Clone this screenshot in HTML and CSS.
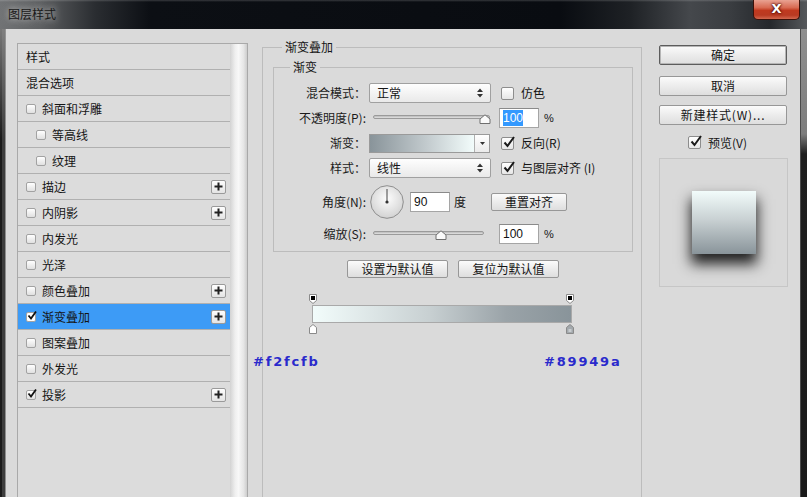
FILE: index.html
```html
<!DOCTYPE html>
<html lang="zh">
<head>
<meta charset="utf-8">
<title>图层样式</title>
<link rel="stylesheet" href="styles.css">
</head>
<body>
<div class="window">
  <div class="titlebar">
    <span class="title">图层样式</span>
    <div class="close">X</div>
  </div>
  <div class="frame">
    <div class="frame-l"></div>
    <div class="client">
      <div class="col-left">
        <div class="listbox">
          <ul class="items">
            <li class="item">样式</li>
            <li class="item">混合选项</li>
            <li class="item"><span class="cb"></span>斜面和浮雕</li>
            <li class="item sub"><span class="cb"></span>等高线</li>
            <li class="item sub"><span class="cb"></span>纹理</li>
            <li class="item"><span class="cb"></span>描边<span class="plus"><svg width="9" height="9" viewBox="0 0 9 9"><path d="M4.5 0.5v8M0.5 4.5h8" stroke="#222" stroke-width="2"/></svg></span></li>
            <li class="item"><span class="cb"></span>内阴影<span class="plus"><svg width="9" height="9" viewBox="0 0 9 9"><path d="M4.5 0.5v8M0.5 4.5h8" stroke="#222" stroke-width="2"/></svg></span></li>
            <li class="item"><span class="cb"></span>内发光</li>
            <li class="item"><span class="cb"></span>光泽</li>
            <li class="item"><span class="cb"></span>颜色叠加<span class="plus"><svg width="9" height="9" viewBox="0 0 9 9"><path d="M4.5 0.5v8M0.5 4.5h8" stroke="#222" stroke-width="2"/></svg></span></li>
            <li class="item on"><span class="cb"><svg width="10" height="10" viewBox="0 0 10 10"><path d="M1.5 4.5L4 7.5L9 0.5" stroke="#111" stroke-width="1.8" fill="none"/></svg></span>渐变叠加<span class="plus"><svg width="9" height="9" viewBox="0 0 9 9"><path d="M4.5 0.5v8M0.5 4.5h8" stroke="#222" stroke-width="2"/></svg></span></li>
            <li class="item"><span class="cb"></span>图案叠加</li>
            <li class="item"><span class="cb"></span>外发光</li>
            <li class="item"><span class="cb"><svg width="10" height="10" viewBox="0 0 10 10"><path d="M1.5 4.5L4 7.5L9 0.5" stroke="#111" stroke-width="1.8" fill="none"/></svg></span>投影<span class="plus"><svg width="9" height="9" viewBox="0 0 9 9"><path d="M4.5 0.5v8M0.5 4.5h8" stroke="#222" stroke-width="2"/></svg></span></li>
          </ul>
          <div class="scroll"></div>
        </div>
      </div>

      <div class="col-main">
        <fieldset class="grp outer">
          <legend>渐变叠加</legend>
          <fieldset class="grp inner">
            <legend>渐变</legend>
            <div class="row first">
              <span class="lbl">混合模式：</span>
              <div class="select"><span>正常</span><svg class="updown" width="6" height="10" viewBox="0 0 6 10"><path d="M0 4L3 0.5L6 4Z M0 6L3 9.5L6 6Z" fill="#333"/></svg></div>
              <span class="chk"></span><span class="chk-txt">仿色</span>
            </div>
            <div class="row">
              <span class="lbl">不透明度(P):</span>
              <div class="slider s-op"><div class="track"></div><svg class="thumb t-op" width="12" height="10" viewBox="0 0 12 10"><path d="M1 9.5V5L6 0.8L11 5V9.5Z" fill="#fafafa" stroke="#6f6f6f"/></svg></div>
              <span class="inp i-op"><span class="hl">100</span></span>
              <span class="pct">%</span>
            </div>
            <div class="row">
              <span class="lbl">渐变：</span>
              <div class="swatch"><div class="sw-grad"></div><div class="sw-dd"><svg width="5" height="3" viewBox="0 0 5 3"><path d="M0 0H5L2.5 3Z" fill="#333"/></svg></div></div>
              <span class="chk on"><svg width="13" height="13" viewBox="0 0 13 13"><path d="M2.5 6.5L5.5 10L12 1" stroke="#1a1a1a" stroke-width="2" fill="none"/></svg></span><span class="chk-txt">反向(R)</span>
            </div>
            <div class="row">
              <span class="lbl">样式：</span>
              <div class="select"><span>线性</span><svg class="updown" width="6" height="10" viewBox="0 0 6 10"><path d="M0 4L3 0.5L6 4Z M0 6L3 9.5L6 6Z" fill="#333"/></svg></div>
              <span class="chk on"><svg width="13" height="13" viewBox="0 0 13 13"><path d="M2.5 6.5L5.5 10L12 1" stroke="#1a1a1a" stroke-width="2" fill="none"/></svg></span><span class="chk-txt">与图层对齐 (I)</span>
            </div>
            <div class="row tall">
              <span class="lbl">角度(N):</span>
              <svg class="dial" width="34" height="34" viewBox="0 0 34 34">
                <defs><radialGradient id="dg" cx="50%" cy="40%" r="60%"><stop offset="0" stop-color="#fdfdfd"/><stop offset="1" stop-color="#d2d2d2"/></radialGradient></defs>
                <circle cx="17" cy="17" r="16.3" fill="url(#dg)" stroke="#8e8e8e"/>
                <path d="M17 17V4" stroke="#444" stroke-width="1"/>
                <circle cx="17" cy="17" r="1.6" fill="#333"/>
              </svg>
              <span class="inp i-ang">90</span>
              <span class="deg">度</span>
              <button class="btn b-reset">重置对齐</button>
            </div>
            <div class="row">
              <span class="lbl">缩放(S):</span>
              <div class="slider s-sc"><div class="track"></div><svg class="thumb t-sc" width="12" height="10" viewBox="0 0 12 10"><path d="M1 9.5V5L6 0.8L11 5V9.5Z" fill="#fafafa" stroke="#6f6f6f"/></svg></div>
              <span class="inp i-sc">100</span>
              <span class="pct">%</span>
            </div>
          </fieldset>
          <div class="btnrow">
            <button class="btn b-def">设置为默认值</button>
            <button class="btn b-def">复位为默认值</button>
          </div>
          <div class="gradedit">
            <div class="stops">
              <svg width="8" height="10" viewBox="0 0 8 10"><path d="M0.5 0.5H7.5V6.5L4 9.5L0.5 6.5Z" fill="#fff" stroke="#8a8a8a"/><rect x="2" y="2" width="4" height="4" fill="#000"/></svg>
              <svg width="8" height="10" viewBox="0 0 8 10"><path d="M0.5 0.5H7.5V6.5L4 9.5L0.5 6.5Z" fill="#fff" stroke="#8a8a8a"/><rect x="2" y="2" width="4" height="4" fill="#000"/></svg>
            </div>
            <div class="gbar"></div>
            <div class="stops bottom">
              <svg width="8" height="10" viewBox="0 0 8 10"><path d="M0.5 9.5H7.5V3.5L4 0.5L0.5 3.5Z" fill="#fff" stroke="#8a8a8a"/></svg>
              <svg width="8" height="10" viewBox="0 0 8 10"><path d="M0.5 9.5H7.5V3.5L4 0.5L0.5 3.5Z" fill="#a3a9ad" stroke="#8a8a8a"/><rect x="2.5" y="5" width="3" height="3" fill="#c9cdd0"/></svg>
            </div>
          </div>
        </fieldset>
      </div>

      <div class="col-side">
        <button class="btn side default">确定</button>
        <button class="btn side b-cancel">取消</button>
        <button class="btn side b-new">新建样式(W)...</button>
        <div class="preview-row">
          <span class="chk on"><svg width="13" height="13" viewBox="0 0 13 13"><path d="M2.5 6.5L5.5 10L12 1" stroke="#1a1a1a" stroke-width="2" fill="none"/></svg></span><span class="chk-txt">预览(V)</span>
        </div>
        <div class="preview">
          <div class="sample"></div>
        </div>
      </div>

      <span class="hex hex-a">#f2fcfb</span>
      <span class="hex hex-b">#89949a</span>
    </div>
    <div class="frame-r"></div>
  </div>
</div>
</body>
</html>
```

FILE: styles.css
```css
* { box-sizing: border-box; }

body {
  margin: 0;
  background: #000;
  font-family: "Noto Sans CJK SC", "Noto Sans", sans-serif;
  font-size: 12px;
  color: #151515;
}

.window {
  width: 807px;
  height: 497px;
  overflow: hidden;
  display: flex;
  flex-direction: column;
  background: #111;
}

/* ---------- title bar ---------- */
.titlebar {
  height: 29px;
  flex: none;
  display: flex;
  align-items: flex-start;
  background:
    linear-gradient(to bottom, rgba(255,255,255,0.18) 0, rgba(255,255,255,0) 2px),
    linear-gradient(to right, #717375 0, #5e6062 40px, #2a2d31 95px, #0c0f14 150px, #090c11 560px, #1e2125 630px, #45484c 690px, #3a3d41 730px, #25282c 770px, #55585b 807px);
}

.title {
  margin: 5px 0 0 8px;
  line-height: 18px;
  color: #181818;
  text-shadow: 0 0 6px rgba(190,190,190,0.9), 0 0 10px rgba(190,190,190,0.7);
}

.close {
  margin-left: auto;
  margin-right: 7px;
  width: 47px;
  height: 20px;
  border: 1px solid #3b1008;
  border-top: none;
  border-radius: 0 0 5px 5px;
  background: linear-gradient(to bottom, #e9a292 0, #d86a52 40%, #c0391f 55%, #b93a22 80%, #d2674e 100%);
  color: #fff;
  font: bold 13px "DejaVu Sans", sans-serif;
  text-align: center;
  line-height: 18px;
  text-shadow: 0 0 2px #400, 0 0 3px #400;
}

/* ---------- frame ---------- */
.frame {
  flex: 1;
  display: flex;
  min-height: 0;
}

.frame-l {
  width: 6px;
  flex: none;
  background:
    linear-gradient(to bottom, rgba(150,150,150,0.75) 0, rgba(150,150,150,0) 110px),
    linear-gradient(to right, #1b1b1b 0 2px, #3d3d3d 2px 5px, #8f8f8f 5px 6px);
}

.frame-r {
  width: 7px;
  flex: none;
  background:
    linear-gradient(to right, #4a4a4a 0 1px, transparent 1px),
    linear-gradient(to bottom, #8e8e8e 0, #7d7d7d 105px, #1e1e1e 125px, #1a1a1a 100%);
}

.client {
  flex: 1;
  display: flex;
  position: relative;
  overflow: hidden;
  background: #dadada;
}

/* ---------- left list ---------- */
.col-left {
  flex: none;
  width: 231px;
  margin: 14px 0 0 11px;
}

.listbox {
  display: flex;
  height: 470px;
  border: 1px solid #a9a9a9;
  background: #dcdcdc;
}

.items {
  list-style: none;
  margin: 0;
  padding: 0;
  width: 212px;
  flex: none;
}

.item {
  height: 26px;
  border-bottom: 1px solid #b0b0b0;
  display: flex;
  align-items: center;
  padding-left: 8px;
  line-height: 16px;
}

.item.sub { padding-left: 18px; }

.item.on { background: #3d9bf6; }

.cb {
  width: 10px;
  height: 10px;
  flex: none;
  margin-right: 6px;
  border: 1px solid #a2a2a2;
  border-radius: 2px;
  background: linear-gradient(#ffffff, #e0e0e0);
  position: relative;
}

.cb svg {
  position: absolute;
  left: 0;
  top: -2px;
}

.item.on .cb { background: #fff; }

.plus {
  margin-left: auto;
  margin-right: 4px;
  width: 15px;
  height: 14px;
  border: 1px solid #9a9a9a;
  border-radius: 2px;
  background: linear-gradient(#fefefe, #e4e4e4);
  display: flex;
  align-items: center;
  justify-content: center;
}

.scroll {
  width: 17px;
  flex: none;
  background: linear-gradient(to right, #d3d3d3, #efefef 30%, #f8f8f8 50%, #e6e6e6 80%, #cdcdcd);
}

/* ---------- main ---------- */
.col-main {
  flex: none;
  width: 380px;
  margin-left: 14px;
}

.grp {
  min-width: 0;
  border: 1px solid #bcbcbc;
}

.grp legend {
  padding: 0 3px;
  line-height: 16px;
}

.outer {
  margin: 10px 0 0 0;
  padding: 0;
  height: 480px;
}

.outer > legend { margin-left: 19px; }

.inner {
  margin: 4px 8px 0 10px;
  padding: 8px 0 7px 0;
}

.inner > legend { margin-left: 16px; }

.row {
  display: flex;
  align-items: center;
  height: 20px;
  margin-top: 5px;
  line-height: 16px;
}

.row.first { margin-top: 0; }

.row.tall {
  height: 34px;
  margin-top: 7px;
}

.lbl {
  width: 92px;
  flex: none;
  text-align: right;
  color: #1a1a1a;
}

.select {
  width: 122px;
  height: 20px;
  margin-left: 3px;
  border: 1px solid #a0a0a0;
  border-radius: 2px;
  background: linear-gradient(#fefefe, #e9e9e9);
  display: flex;
  align-items: center;
  justify-content: space-between;
  padding: 0 7px 0 7px;
}

.chk {
  width: 13px;
  height: 13px;
  flex: none;
  margin-left: 10px;
  border: 1px solid #8d8d8d;
  border-radius: 2px;
  background: linear-gradient(#ffffff, #e6e6e6);
  position: relative;
}

.chk svg {
  position: absolute;
  left: 0;
  top: -2px;
}

.chk-txt { margin-left: 7px; }

.slider {
  position: relative;
  height: 12px;
  margin-left: 7px;
  flex: none;
}

.s-op { width: 117px; }
.s-sc { width: 111px; }

.track {
  position: absolute;
  left: 0;
  right: 0;
  top: 3px;
  height: 4px;
  border: 1px solid #9a9a9a;
  border-radius: 2px;
  background: linear-gradient(#b9b9b9, #e2e2e2);
}

.thumb { position: absolute; top: 2px; }
.t-op { left: 106px; }
.t-sc { left: 62px; }

.inp {
  width: 40px;
  height: 20px;
  flex: none;
  border: 1px solid #a5a5a5;
  border-top-color: #8a8a8a;
  background: #fff;
  padding-left: 3px;
  font: 12px/18px "Liberation Sans", sans-serif;
  color: #111;
}

.i-op { margin-left: 9px; }
.i-ang { margin-left: 6px; }
.i-sc { margin-left: 15px; }

.hl {
  background: #3399ff;
  color: #fff;
  padding: 1px 0;
}

.pct {
  margin-left: 5px;
  font: 11px "Liberation Sans", sans-serif;
}

.swatch {
  width: 121px;
  height: 19px;
  margin-left: 3px;
  border: 1px solid #9a9a9a;
  display: flex;
  flex: none;
}

.sw-grad {
  flex: 1;
  background: linear-gradient(to right, #89949a, #c3cbce 55%, #f2fcfb);
}

.sw-dd {
  width: 15px;
  border-left: 1px solid #b0b0b0;
  background: linear-gradient(#fefefe, #ebebeb);
  display: flex;
  align-items: center;
  justify-content: center;
}

.swatch + .chk { margin-left: 11px; }

.dial {
  margin-left: 4px;
  flex: none;
}

.deg { margin-left: 4px; }

.btn {
  font: inherit;
  font-size: 12px;
  color: #151515;
  padding: 0;
  border: 1px solid #979797;
  border-radius: 2px;
  background: linear-gradient(#fbfbfb, #ececec 50%, #dedede);
  line-height: 16px;
  cursor: default;
}

.b-reset {
  width: 76px;
  height: 18px;
  margin-left: 25px;
}

.btnrow {
  display: flex;
  justify-content: center;
  gap: 10px;
  margin: 8px 8px 0 10px;
}

.b-def {
  width: 101px;
  height: 18px;
}

.gradedit {
  margin: 16px 0 0 49px;
  width: 260px;
}

.stops {
  display: flex;
  justify-content: space-between;
  height: 10px;
  margin: 0 -2px 0 -3px;
}

.stops svg { display: block; }

.gbar {
  height: 18px;
  margin-top: 1px;
  border: 1px solid #a9a9a9;
  background: linear-gradient(to right, #f2fcfb, #c8d0d2 45%, #9aa3a8 75%, #89949a);
}

.stops.bottom { margin-top: 1px; }

/* ---------- right side ---------- */
.col-side {
  flex: none;
  width: 128px;
  margin: 16px 0 0 17px;
}

.btn.side {
  display: block;
  width: 128px;
  height: 20px;
}

.btn.default {
  border: 1px solid #5c5c5c;
  box-shadow: inset 0 0 0 1px #b5b5b5;
}

.b-cancel { margin-top: 11px; }
.b-new { margin-top: 9px; letter-spacing: 0.8px; }

.preview-row {
  display: flex;
  align-items: center;
  height: 13px;
  margin-top: 11px;
  padding-left: 29px;
  line-height: 16px;
}

.preview-row .chk { margin-left: 0; }

.preview {
  margin-top: 9px;
  width: 129px;
  height: 129px;
  border: 1px solid #c6c6c6;
  background: #d9d9d9;
  display: flex;
  align-items: center;
  justify-content: center;
}

.sample {
  width: 64px;
  height: 63px;
  background: linear-gradient(to bottom, #f2fcfb, #c9d1d3 45%, #89949a);
  box-shadow: 0 9px 13px 1px rgba(0,0,0,0.85);
}

/* ---------- colour annotations ---------- */
.hex {
  position: absolute;
  top: 325px;
  font: bold 13px/16px "DejaVu Sans", sans-serif;
  letter-spacing: 1.8px;
  color: #2a2acc;
}

.hex-a { left: 247px; }
.hex-b { left: 538px; }
```
